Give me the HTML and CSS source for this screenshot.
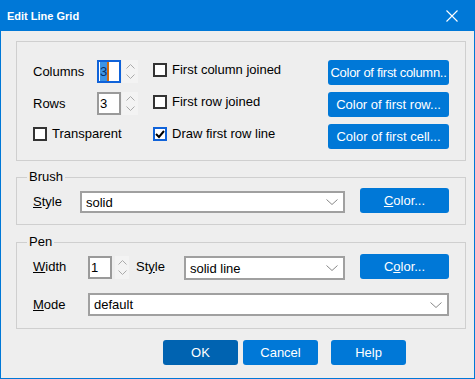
FILE: index.html
```html
<!DOCTYPE html>
<html lang="en">

<head>
    <meta charset="UTF-8">
    <title>Edit Line Grid</title>
    <link rel="stylesheet" href="styles.css">
</head>

<body>
    <div class="window">
        <!-- Title bar -->
        <div class="titlebar">
            <span class="title">Edit Line Grid</span>
            <svg class="close" width="12" height="12" viewBox="0 0 12 12">
                <path d="M0.5 0.5 L11.5 11.5 M11.5 0.5 L0.5 11.5" stroke="#fff" stroke-width="1.1" fill="none"/>
            </svg>
        </div>

        <div class="dialog">
            <!-- Grid options -->
            <div class="group grid-group">
                <span class="label">Columns</span>
                <div class="spin">
                    <div class="spin-field focused"><span class="sel">3</span><span class="caret"></span></div>
                    <div class="spin-arrows">
                        <svg width="9" height="5" viewBox="0 0 9 5"><path d="M0.5 4.5 L4.5 0.5 L8.5 4.5" stroke="#aaa" fill="none"/></svg>
                        <svg width="9" height="5" viewBox="0 0 9 5"><path d="M0.5 0.5 L4.5 4.5 L8.5 0.5" stroke="#aaa" fill="none"/></svg>
                    </div>
                </div>
                <label class="check"><span class="box"></span>First column joined</label>
                <button class="btn tight">Color of first column..</button>

                <span class="label">Rows</span>
                <div class="spin">
                    <div class="spin-field">3</div>
                    <div class="spin-arrows">
                        <svg width="9" height="5" viewBox="0 0 9 5"><path d="M0.5 4.5 L4.5 0.5 L8.5 4.5" stroke="#aaa" fill="none"/></svg>
                        <svg width="9" height="5" viewBox="0 0 9 5"><path d="M0.5 0.5 L4.5 4.5 L8.5 0.5" stroke="#aaa" fill="none"/></svg>
                    </div>
                </div>
                <label class="check"><span class="box"></span>First row joined</label>
                <button class="btn">Color of first row...</button>

                <label class="check span-two"><span class="box"></span>Transparent</label>
                <label class="check"><span class="box checked">
                    <svg width="10" height="10" viewBox="0 0 10 10"><path d="M1 5 L4 8 L9 2" stroke="#000" stroke-width="2" fill="none"/></svg>
                </span>Draw first row line</label>
                <button class="btn">Color of first cell...</button>
            </div>

            <!-- Brush -->
            <div class="group brush-group">
                <span class="legend">Brush</span>
                <div class="row">
                    <span class="label brush-label"><u>S</u>tyle</span>
                    <div class="combo brush-combo">
                        <span>solid</span>
                        <svg width="12" height="6" viewBox="0 0 12 6"><path d="M0.5 0.5 L6 5.5 L11.5 0.5" stroke="#888" fill="none"/></svg>
                    </div>
                    <button class="btn color-btn"><u>C</u>olor...</button>
                </div>
            </div>

            <!-- Pen -->
            <div class="group pen-group">
                <span class="legend">Pen</span>
                <div class="row">
                    <span class="label pen-label"><u>W</u>idth</span>
                    <div class="spin small-spin">
                        <div class="spin-field">1</div>
                        <div class="spin-arrows">
                            <svg width="9" height="5" viewBox="0 0 9 5"><path d="M0.5 4.5 L4.5 0.5 L8.5 4.5" stroke="#aaa" fill="none"/></svg>
                            <svg width="9" height="5" viewBox="0 0 9 5"><path d="M0.5 0.5 L4.5 4.5 L8.5 0.5" stroke="#aaa" fill="none"/></svg>
                        </div>
                    </div>
                    <span class="label style-label">St<u>y</u>le</span>
                    <div class="combo pen-combo">
                        <span>solid line</span>
                        <svg width="12" height="6" viewBox="0 0 12 6"><path d="M0.5 0.5 L6 5.5 L11.5 0.5" stroke="#888" fill="none"/></svg>
                    </div>
                    <button class="btn color-btn">C<u>o</u>lor...</button>
                </div>
                <div class="row mode-row">
                    <span class="label pen-label"><u>M</u>ode</span>
                    <div class="combo mode-combo">
                        <span>default</span>
                        <svg width="12" height="6" viewBox="0 0 12 6"><path d="M0.5 0.5 L6 5.5 L11.5 0.5" stroke="#888" fill="none"/></svg>
                    </div>
                </div>
            </div>

            <!-- Dialog buttons -->
            <div class="actions">
                <button class="btn action default">OK</button>
                <button class="btn action">Cancel</button>
                <button class="btn action help">Help</button>
            </div>
        </div>
    </div>
</body>

</html>
```

FILE: styles.css
```css
/* General Reset */
* {
    margin: 0;
    padding: 0;
    box-sizing: border-box;
}

body {
    font-family: 'Liberation Sans', Arial, sans-serif;
    font-size: 13px;
    color: #000;
    background-color: #eeeeee;
}

/* Window frame */
.window {
    width: 475px;
    height: 379px;
    display: flex;
    flex-direction: column;
}

.titlebar {
    height: 31px;
    background-color: #0078d7;
    color: white;
    display: flex;
    align-items: center;
    justify-content: space-between;
    padding: 0 17px 0 7px;
}

.title {
    font-size: 11px;
    font-weight: bold;
}

.close {
    display: block;
}

.dialog {
    flex: 1;
    background-color: #eeeeee;
    border: 1px solid #0078d7;
    border-top: none;
    padding: 10px 0 0 15px;
}

/* Group boxes */
.group {
    position: relative;
    width: 450px;
    border: 1px solid #cfcfcf;
}

.legend {
    position: absolute;
    top: -9px;
    left: 10px;
    padding: 0 2px;
    background-color: #eeeeee;
    line-height: 16px;
}

.label {
    line-height: 23px;
    white-space: nowrap;
}

/* Grid group */
.grid-group {
    height: 120px;
    padding: 18px 0 0 16px;
    display: grid;
    grid-template-columns: 64px 56px 175px 121px;
    grid-template-rows: 25px 25px 24px;
    row-gap: 7px;
    align-items: start;
}

.span-two {
    grid-column: span 2;
}

/* Spin boxes */
.spin {
    display: flex;
    gap: 1px;
}

.spin-field {
    width: 24px;
    height: 23px;
    background-color: white;
    border: 2px solid #9a9a9a;
    padding-left: 1px;
    line-height: 19px;
    display: flex;
}

.spin-field.focused {
    border-color: #0f62d9;
}

.sel {
    background-color: #3d94e6;
    color: #06306b;
    height: 19px;
}

.caret {
    width: 2px;
    height: 19px;
    background-color: #d06a10;
}

.spin-arrows {
    width: 16px;
    height: 23px;
    background-color: #f3f3f3;
    display: flex;
    flex-direction: column;
    justify-content: space-around;
    align-items: center;
    padding: 2px 0;
}

.spin-arrows svg {
    display: block;
}

.small-spin {
    gap: 3px;
    margin-top: 2px;
}

.small-spin .spin-arrows {
    width: 14px;
}

/* Checkboxes */
.check {
    display: flex;
    align-items: center;
    gap: 5px;
    line-height: 14px;
    margin-top: 3px;
    white-space: nowrap;
}

.box {
    width: 14px;
    height: 14px;
    border: 2px solid #333;
    background-color: white;
    display: flex;
    align-items: center;
    justify-content: center;
}

.box.checked {
    border-color: #0f62d9;
}

/* Buttons */
.btn {
    font-family: 'Liberation Sans', Arial, sans-serif;
    font-size: 13px;
    color: white;
    background-color: #0078d7;
    border: none;
    border-radius: 3px;
    height: 25px;
    padding: 0;
    white-space: nowrap;
    overflow: hidden;
}

.btn.tight {
    letter-spacing: -0.3px;
}

.grid-group .btn {
    width: 121px;
}

.color-btn {
    width: 89px;
    margin-left: 15px;
}

.btn u {
    text-decoration-thickness: 1px;
}

/* Combo boxes */
.combo {
    height: 22px;
    background-color: white;
    border: 2px solid #a0a0a0;
    display: flex;
    align-items: center;
    justify-content: space-between;
    padding: 0 5px 0 4px;
}

.combo svg {
    display: block;
}

/* Brush group */
.brush-group {
    height: 48px;
    margin-top: 16px;
    padding: 10px 0 0 16px;
}

.row {
    display: flex;
    align-items: flex-end;
}

.brush-label {
    width: 47px;
    line-height: 22px;
}

.brush-combo {
    width: 265px;
}

/* Pen group */
.pen-group {
    height: 87px;
    margin-top: 17px;
    padding: 11px 0 0 16px;
}

.pen-group .row {
    align-items: flex-start;
}

.pen-label {
    width: 55px;
    margin-top: 1px;
}

.style-label {
    margin: 1px 0 0 7px;
    width: 48px;
}

.pen-combo {
    width: 161px;
    height: 24px;
    margin-top: 2px;
}

.mode-row {
    margin-top: 13px;
}

.mode-row .pen-label {
    margin-top: 0;
}

.mode-combo {
    width: 361px;
    height: 23px;
}

/* Dialog buttons */
.actions {
    display: flex;
    margin: 11px 0 0 147px;
    gap: 5px;
}

.action {
    width: 75px;
}

.action.default {
    background-color: #0063b1;
}

.action.help {
    margin-left: 8px;
}
```
